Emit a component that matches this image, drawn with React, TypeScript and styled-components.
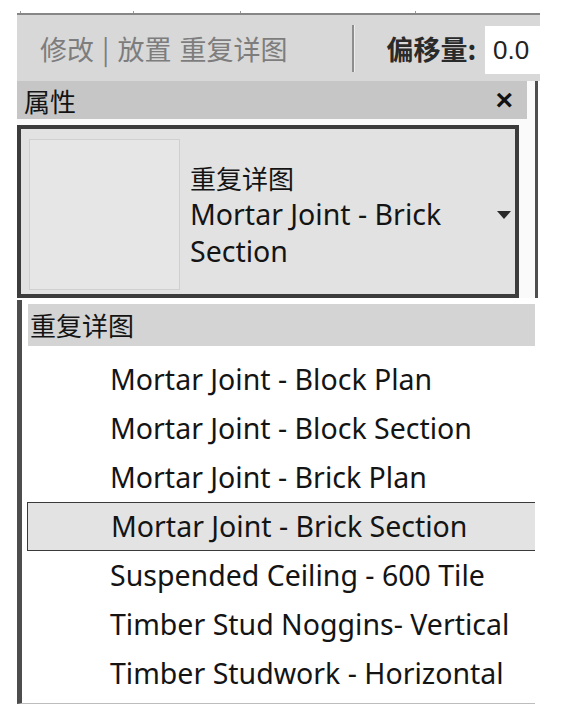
import styled, { createGlobalStyle } from "styled-components";

const GlobalStyle = createGlobalStyle`
    body {
        margin: 0;
        background: #ffffff;
        font-family: "Noto Sans", "Noto Sans CJK SC", sans-serif;
        color: #141414;
    }
`;

const Screen = styled.div`
    width: 523px;
    padding: 11px 0 0 17px;
`;

const RibbonEdge = styled.div`
    display: flex;
    height: 2px;
    border-bottom: 2px solid #868686;
`;

const RibbonTick = styled.div<{ $w: number }>`
    width: ${(p) => p.$w}px;
    height: 2px;
    border-right: 1px solid #9a9a9a;
`;

const Toolbar = styled.div`
    display: flex;
    align-items: center;
    height: 66px;
    background: #d8d8d8;
    padding-left: 23px;
    font-family: "Noto Sans CJK SC", sans-serif;
    font-size: 27px;
`;

const ContextLabel = styled.div`
    color: #7d7d7d;
    white-space: nowrap;
    word-spacing: 2px;
`;

const Divider = styled.div`
    width: 2px;
    height: 47px;
    margin-left: 65px;
    background: #8e8e8e;
    border-right: 1px solid #ececec;
`;

const OffsetLabel = styled.div`
    margin-left: 31px;
    font-weight: 700;
    color: #2a2a2a;
    white-space: nowrap;
`;

const OffsetInput = styled.div`
    margin-left: auto;
    align-self: flex-start;
    margin-top: 11px;
    width: 47px;
    height: 48px;
    padding-left: 8px;
    background: #ffffff;
    font-family: "Liberation Sans", sans-serif;
    font-size: 26px;
    line-height: 48px;
    color: #222;
`;

const Panel = styled.div`
    width: 518px;
    background: #fafafa;
    border-right: 3px solid #4f4f4f;
`;

const PanelHeader = styled.div`
    display: flex;
    align-items: center;
    justify-content: space-between;
    height: 38px;
    margin-right: 8px;
    padding: 0 14px 0 7px;
    background: #c6c6c6;
    font-family: "Noto Sans CJK SC", sans-serif;
    font-size: 26px;
`;

const CloseMark = styled.span`
    font-family: "Liberation Sans", sans-serif;
    font-size: 30px;
    font-weight: 700;
    color: #111;
`;

const TypeSelector = styled.div`
    display: flex;
    align-items: center;
    margin: 6px 16px 0 0;
    height: 173px;
    box-sizing: border-box;
    padding: 10px 4px 4px 8px;
    border: 4px solid #3c3c3c;
    background: #e2e2e2;
`;

const Thumbnail = styled.div`
    width: 151px;
    height: 151px;
    box-sizing: border-box;
    flex-shrink: 0;
    background: #e6e6e6;
    border: 1px solid #d0d0d0;
`;

const TypeText = styled.div`
    flex: 1;
    margin-left: 10px;
    font-size: 28.5px;
    line-height: 37px;
    padding-right: 20px;
`;

const TypeFamily = styled.div`
    font-family: "Noto Sans CJK SC", sans-serif;
    font-size: 26px;
`;

const Caret = styled.svg`
    width: 14px;
    height: 8px;
    flex-shrink: 0;
`;

const Dropdown = styled.div`
    width: 518px;
    margin-top: 2px;
    height: 404px;
    box-sizing: border-box;
    padding: 4px 0 0 6px;
    border-left: 5px solid #4d4d4d;
    border-bottom: 1px solid #bdbdbd;
    background: #ffffff;
    overflow: hidden;
`;

const GroupHeader = styled.div`
    height: 42px;
    line-height: 42px;
    padding-left: 2px;
    margin-bottom: 9px;
    background: #d4d4d4;
    font-family: "Noto Sans CJK SC", sans-serif;
    font-size: 26px;
`;

const TypeRow = styled.div<{ $selected?: boolean }>`
    height: 49px;
    box-sizing: border-box;
    line-height: ${(p) => (p.$selected ? "47px" : "49px")};
    padding-left: ${(p) => (p.$selected ? "83px" : "82px")};
    margin: ${(p) => (p.$selected ? "0 0 0 -1px" : "0")};
    font-size: 28.5px;
    white-space: nowrap;
    background: ${(p) => (p.$selected ? "#e3e3e3" : "transparent")};
    border: ${(p) => (p.$selected ? "1px solid #3a3a3a" : "none")};
    border-right: none;
`;

const types = [
    "Mortar Joint - Block Plan",
    "Mortar Joint - Block Section",
    "Mortar Joint - Brick Plan",
    "Mortar Joint - Brick Section",
    "Suspended Ceiling - 600 Tile",
    "Timber Stud Noggins- Vertical",
    "Timber Studwork - Horizontal",
];

const selectedType = "Mortar Joint - Brick Section";

const App = () => {
    return (
        <>
            <GlobalStyle />
            <Screen>
                <RibbonEdge>
                    <RibbonTick $w={3} />
                    <RibbonTick $w={112} />
                    <RibbonTick $w={106} />
                    <RibbonTick $w={174} />
                </RibbonEdge>
                <Toolbar>
                    <ContextLabel>修改 | 放置 重复详图</ContextLabel>
                    <Divider />
                    <OffsetLabel>偏移量:</OffsetLabel>
                    <OffsetInput>0.0</OffsetInput>
                </Toolbar>
                <Panel>
                    <PanelHeader>
                        <span>属性</span>
                        <CloseMark>×</CloseMark>
                    </PanelHeader>
                    <TypeSelector>
                        <Thumbnail />
                        <TypeText>
                            <TypeFamily>重复详图</TypeFamily>
                            {selectedType}
                        </TypeText>
                        <Caret viewBox="0 0 14 8">
                            <path d="M0 0 H14 L7 8 Z" fill="#2a2a2a" />
                        </Caret>
                    </TypeSelector>
                </Panel>
                <Dropdown>
                    <GroupHeader>重复详图</GroupHeader>
                    {types.map((t) => (
                        <TypeRow key={t} $selected={t === selectedType}>
                            {t}
                        </TypeRow>
                    ))}
                </Dropdown>
            </Screen>
        </>
    );
};

export default App;
